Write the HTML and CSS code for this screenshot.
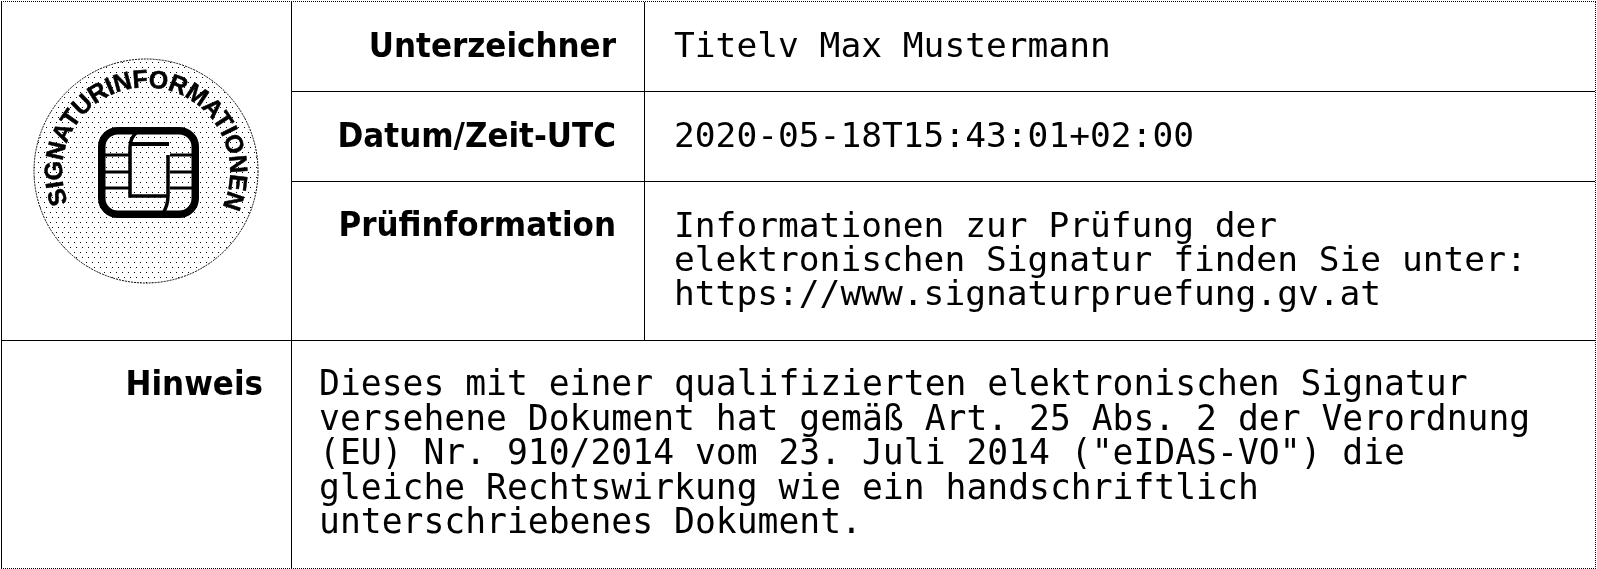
FILE: index.html
```html
<!DOCTYPE html>
<html lang="de">
<head>
  <meta charset="UTF-8" />
  <title>Signaturinformationen</title>
  <link rel="stylesheet" href="styles.css">
</head>
<body>
  <div class="sig-block">
    <div class="sig-top">
      <div class="seal-cell">
        <svg class="seal" width="288" height="338" viewBox="0 0 288 338">
          <defs>
            <pattern id="dots" width="12" height="10" patternUnits="userSpaceOnUse">
              <rect x="0" y="0" width="1" height="1" fill="#000"/>
              <rect x="6" y="0" width="1" height="1" fill="#000"/>
              <rect x="2" y="5" width="1" height="1" fill="#000"/>
              <rect x="8" y="5" width="1" height="1" fill="#000"/>
            </pattern>
            <path id="arc" d="M67 203 A84 84 0 1 1 221 203"/>
          </defs>
          <circle cx="144" cy="169" r="112" fill="url(#dots)" stroke="#000" stroke-width="1" stroke-dasharray="2 1"/>
          <text class="seal-text"><textPath href="#arc" startOffset="50.6%" text-anchor="middle">SIGNATURINFORMATIONEN</textPath></text>
          <path d="M100 153H128M100 170H128M100 186H128M168 153H194M168 170H194M168 186H194" fill="none" stroke="#000" stroke-width="3"/>
          <path d="M135 130Q128 136 128 145V194H166M166 153V194Q166 204 160 213" fill="none" stroke="#000" stroke-width="3.5"/>
          <path d="M128 142H167" fill="none" stroke="#000" stroke-width="4"/>
          <rect x="99.75" y="128.75" width="93.5" height="83.5" rx="16" fill="none" stroke="#000" stroke-width="7.5"/>
        </svg>
      </div>
      <div class="sig-rows">
        <div class="row row-name">
          <div class="label">Unterzeichner</div>
          <div class="value">Titelv Max Mustermann</div>
        </div>
        <div class="row row-date">
          <div class="label">Datum/Zeit-UTC</div>
          <div class="value">2020-05-18T15:43:01+02:00</div>
        </div>
        <div class="row row-check">
          <div class="label">Prüfinformation</div>
          <div class="value">Informationen zur Prüfung der<br>elektronischen Signatur finden Sie unter:<br>https://www.signaturpruefung.gv.at</div>
        </div>
      </div>
    </div>
    <div class="sig-note">
      <div class="label">Hinweis</div>
      <div class="value">Dieses mit einer qualifizierten elektronischen Signatur<br>versehene Dokument hat gemäß Art. 25 Abs. 2 der Verordnung<br>(EU) Nr. 910/2014 vom 23. Juli 2014 ("eIDAS-VO") die<br>gleiche Rechtswirkung wie ein handschriftlich<br>unterschriebenes Dokument.</div>
    </div>
  </div>
</body>
</html>
```

FILE: styles.css
```css
* {
  box-sizing: border-box;
}
html, body {
  height: 100%;
}
body {
  margin: 0;
  background: #fff;
  color: #000;
  overflow: hidden;
  filter: contrast(4);
}

.sig-block {
  margin: 1px 0 0 1px;
  width: 1595px;
  height: 568px;
  border: 1px solid #000;
  border-bottom: 1px dotted #000;
  border-right: 1px dotted #000;
  border-top: 1px dotted #000;
}

.sig-top {
  display: flex;
  height: 339px;
  border-bottom: 1px solid #000;
}

.seal-cell {
  width: 290px;
  border-right: 1px solid #000;
  flex-shrink: 0;
}
.seal {
  display: block;
}
.seal-text {
  font-family: "Liberation Sans", sans-serif;
  font-weight: bold;
  font-size: 25px;
  letter-spacing: -0.3px;
  fill: #000;
  stroke: #000;
  stroke-width: 0.5px;
}

.sig-rows {
  flex: 1;
  display: flex;
  flex-direction: column;
}
.row {
  display: flex;
  border-bottom: 1px solid #000;
}
.row:last-child {
  border-bottom: none;
}
.row-name, .row-date {
  height: 90px;
}
.row-check {
  flex: 1;
}

.label {
  font-family: "DejaVu Sans", sans-serif;
  font-stretch: condensed;
  font-weight: bold;
  font-size: 34.5px;
  line-height: 34.6px;
  text-align: right;
}
.value {
  font-family: "DejaVu Sans Mono", monospace;
  font-size: 34.55px;
  line-height: 34.6px;
}

.row .label {
  width: 353px;
  padding: 26px 28px 0 0;
  border-right: 1px solid #000;
  flex-shrink: 0;
}
.row .value {
  padding: 26px 0 0 29px;
}
.row-check .label {
  padding-top: 25px;
}
.row-check .value {
  line-height: 34px;
}

.sig-note {
  display: flex;
}
.sig-note .label {
  width: 290px;
  padding: 25px 28px 0 0;
  border-right: 1px solid #000;
  height: 227px;
  flex-shrink: 0;
}
.sig-note .value {
  font-size: 34.7px;
  padding: 25px 0 0 27px;
}
```
